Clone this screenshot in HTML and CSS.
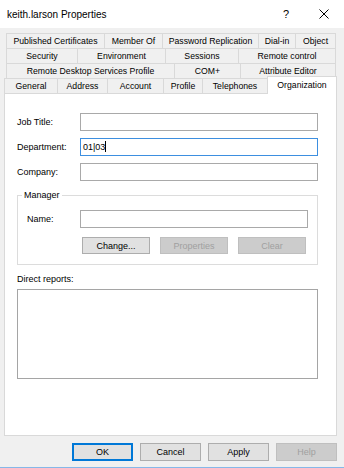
FILE: index.html
```html
<!DOCTYPE html>
<html lang="en">
<head>
	<meta charset="UTF-8">
	<title>keith.larson Properties</title>
	<link rel="stylesheet" href="styles.css">
</head>
<body>
	<div class="dialog">
		<header class="titlebar">
			<span class="title">keith.larson Properties</span>
			<span class="help">?</span>
			<span class="close">
				<svg width="10" height="10" viewBox="0 0 10 10"><path d="M0.5 0.5L9.5 9.5M9.5 0.5L0.5 9.5" stroke="#000" stroke-width="1"/></svg>
			</span>
		</header>

		<nav class="tabs">
			<div class="tab-row row-1">
				<div class="tab">Published Certificates</div>
				<div class="tab">Member Of</div>
				<div class="tab">Password Replication</div>
				<div class="tab">Dial-in</div>
				<div class="tab">Object</div>
			</div>
			<div class="tab-row row-2">
				<div class="tab">Security</div>
				<div class="tab">Environment</div>
				<div class="tab">Sessions</div>
				<div class="tab">Remote control</div>
			</div>
			<div class="tab-row row-3">
				<div class="tab">Remote Desktop Services Profile</div>
				<div class="tab">COM+</div>
				<div class="tab">Attribute Editor</div>
			</div>
			<div class="tab-row row-4">
				<div class="tab">General</div>
				<div class="tab">Address</div>
				<div class="tab">Account</div>
				<div class="tab">Profile</div>
				<div class="tab">Telephones</div>
				<div class="tab selected">Organization</div>
			</div>
		</nav>

		<main class="panel">
			<div class="fields">
				<div class="field">
					<label>Job Title:</label>
					<div class="textbox"></div>
				</div>
				<div class="field">
					<label>Department:</label>
					<div class="textbox focused">01|03<span class="caret"></span></div>
				</div>
				<div class="field">
					<label>Company:</label>
					<div class="textbox"></div>
				</div>
			</div>

			<section class="group">
				<span class="group-title">Manager</span>
				<div class="field name-field">
					<label>Name:</label>
					<div class="textbox"></div>
				</div>
				<div class="group-buttons">
					<button class="btn">Change...</button>
					<button class="btn" disabled>Properties</button>
					<button class="btn" disabled>Clear</button>
				</div>
			</section>

			<div class="reports-label">Direct reports:</div>
			<div class="listbox"></div>
		</main>

		<footer class="footer">
			<button class="btn default">OK</button>
			<button class="btn">Cancel</button>
			<button class="btn">Apply</button>
			<button class="btn" disabled>Help</button>
		</footer>
	</div>
</body>
</html>
```

FILE: styles.css
```css
body {
	margin: 0;
	background: #f0f0f0;
	font-family: "Liberation Sans", Arial, sans-serif;
	font-size: 9px;
	color: #000;
}

.dialog {
	width: 344px;
	height: 468px;
	box-sizing: border-box;
	border-bottom: 1px solid #86b8e8;
	display: flex;
	flex-direction: column;
}

/* title bar */
.titlebar {
	height: 28px;
	flex: none;
	background: #fff;
	display: flex;
	align-items: center;
	padding-left: 7px;
}
.title {
	flex: 1;
	font-size: 10px;
}
.help {
	width: 12px;
	text-align: center;
	font-size: 11px;
	margin-right: 27px;
}
.close {
	width: 10px;
	height: 10px;
	margin-right: 15px;
	display: flex;
}

/* tabs */
.tabs {
	margin-top: 5px;
	flex: none;
}
.tab-row {
	display: grid;
	height: 15px;
	margin: 0 8px 0 6px;
	border-right: 1px solid #d9d9d9;
}
.row-1 { grid-template-columns: 98px 58px 96px 37px 1fr; }
.row-2 { grid-template-columns: 71px 88px 73px 1fr; }
.row-3 { grid-template-columns: 168px 66px 1fr; }
.row-4 {
	grid-template-columns: 53px 50px 56px 39px 65px 1fr;
	margin: 0 7px 0 4px;
	border-right: none;
}
.tab {
	box-sizing: border-box;
	border-top: 1px solid #d9d9d9;
	border-left: 1px solid #d9d9d9;
	text-align: center;
	line-height: 14px;
	font-size: 8.7px;
	white-space: nowrap;
	overflow: hidden;
}
.tab.selected {
	position: relative;
	z-index: 1;
	background: #fff;
	margin-top: -2px;
	height: 18px;
	border-right: 1px solid #d9d9d9;
	line-height: 16px;
}

/* panel */
.panel {
	flex: none;
	margin: 0 7px 0 4px;
	height: 343px;
	box-sizing: border-box;
	background: #fff;
	border: 1px solid #d9d9d9;
	padding: 19px 18px 0 12px;
}
.fields {
	display: flex;
	flex-direction: column;
	gap: 7px;
}
.field {
	display: grid;
	grid-template-columns: 63px 1fr;
	align-items: center;
}
.textbox {
	height: 18px;
	box-sizing: border-box;
	border: 1px solid #a9a9a9;
	background: #fff;
	padding: 0 2px;
	line-height: 16px;
	font-size: 9px;
}
.textbox.focused {
	border-color: #3d8fe0;
}
.caret {
	display: inline-block;
	width: 1px;
	height: 11px;
	background: #000;
	vertical-align: -2px;
}

.group {
	margin-top: 14px;
	border: 1px solid #dcdcdc;
	padding: 0 9px 10px 9px;
}
.group-title {
	display: block;
	width: fit-content;
	margin: -6px 0 0 -5px;
	padding: 0 2px;
	background: #fff;
	line-height: 11px;
}
.name-field {
	grid-template-columns: 53px 1fr;
	margin-top: 9px;
}
.group-buttons {
	display: flex;
	gap: 10px;
	margin: 9px 0 0 55px;
}
.group-buttons .btn {
	width: 68px;
	height: 17px;
}

.reports-label {
	margin-top: 9px;
	line-height: 11px;
}
.listbox {
	margin-top: 4px;
	height: 90px;
	box-sizing: border-box;
	border: 1px solid #a5a5a5;
}

/* buttons */
.btn {
	width: 61px;
	height: 18px;
	box-sizing: border-box;
	padding: 0;
	background: #e1e1e1;
	border: 1px solid #adadad;
	font-family: inherit;
	font-size: 9px;
	color: #000;
}
.btn:disabled {
	background: #cccccc;
	border-color: #bfbfbf;
	color: #a0a0a0;
}
.btn.default {
	border-color: #0078d7;
	box-shadow: inset 0 0 0 1px #0078d7;
}

.footer {
	display: flex;
	justify-content: flex-end;
	gap: 7px;
	padding: 7px 7px 0 0;
}
```
